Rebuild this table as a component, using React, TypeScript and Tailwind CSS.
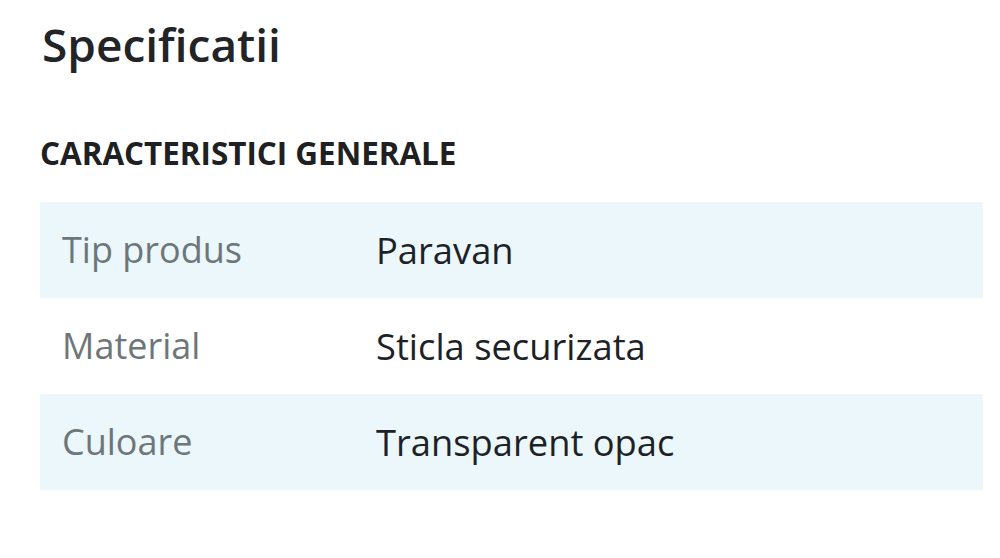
const specs = [
  { label: 'Tip produs', value: 'Paravan' },
  { label: 'Material', value: 'Sticla securizata' },
  { label: 'Culoare', value: 'Transparent opac' },
]

export default function App() {
  return (
    <div
      className="min-h-screen bg-white px-10 pt-[15px]"
      style={{ fontFamily: '"Open Sans", "Noto Sans", sans-serif' }}
    >
      <h1 className="pl-[2px] text-[46px] leading-[58px] font-semibold text-[#222426]">Specificatii</h1>

      <h2 className="mt-[62px] text-[31.4px] leading-[36px] font-bold text-[#1e2022]">
        CARACTERISTICI GENERALE
      </h2>

      <div className="mt-[31px] w-[943px]">
        {specs.map((row, i) => (
          <div
            key={row.label}
            className={`flex items-center h-[96px] ${i % 2 === 0 ? 'bg-[#ecf7fc]' : 'bg-white'}`}
          >
            <div className="w-[336px] pl-[22px] text-[36px] leading-[48px] text-[#6d7679]">
              {row.label}
            </div>
            <div className="text-[36.3px] leading-[48px] text-[#1d2226]">{row.value}</div>
          </div>
        ))}
      </div>
    </div>
  )
}
